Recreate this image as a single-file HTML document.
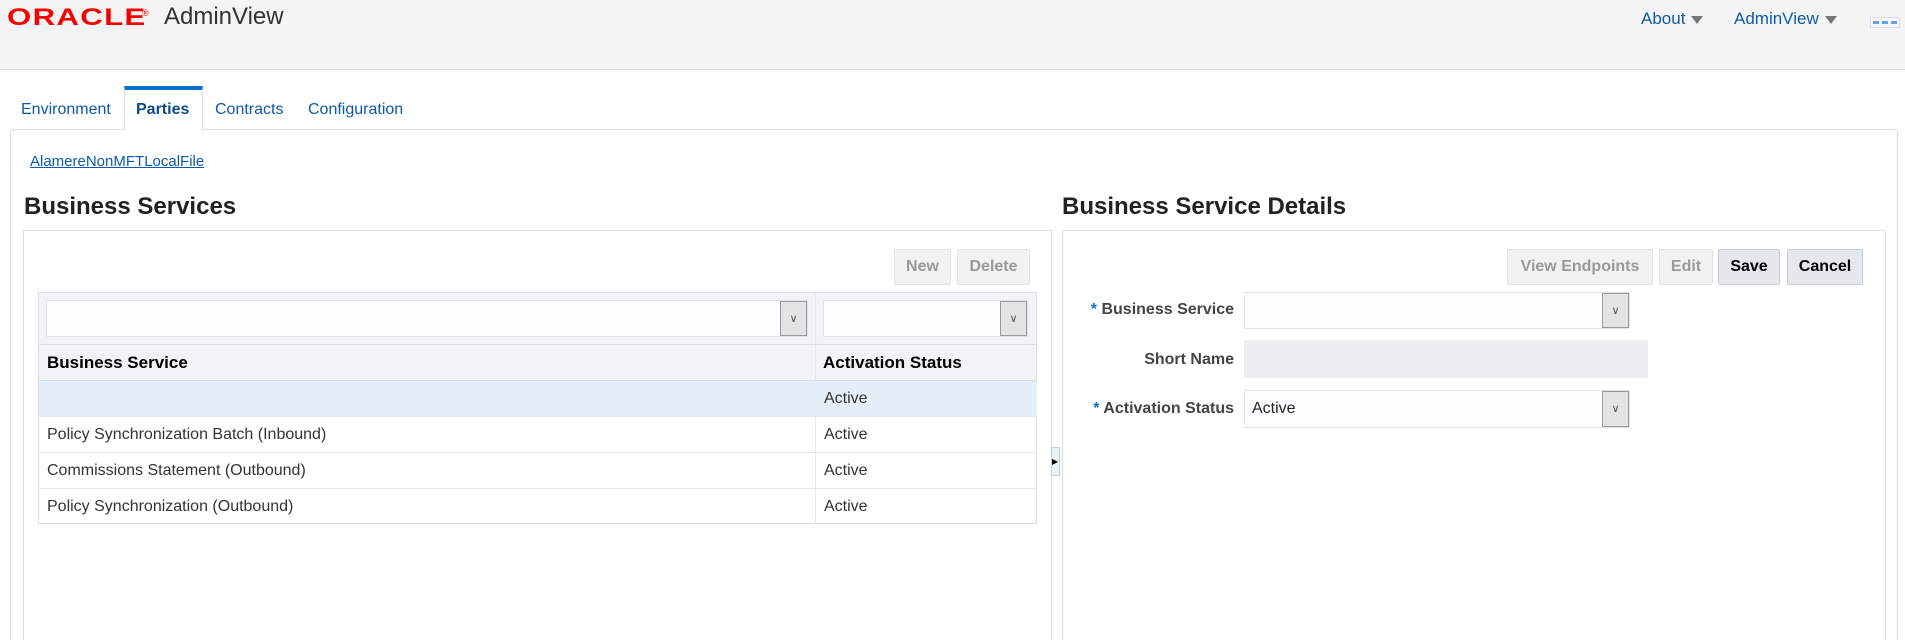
<!DOCTYPE html>
<html style="height:640px;overflow:hidden"><head><meta charset="utf-8"><style>
*{box-sizing:border-box;margin:0;padding:0}
body{width:1905px;height:640px;overflow:hidden;background:#fff;font-family:"Liberation Sans",Arial,sans-serif;position:relative;color:#333}
.a{position:absolute}
.hdr{left:0;top:0;width:1905px;height:70px;background:#f4f4f4;border-bottom:1px solid #d6dfe6}
.logo{left:7px;top:4px;font-size:24px;font-weight:bold;color:#f80000;letter-spacing:1px;transform:scaleX(1.3);transform-origin:left}
.tabs{font-size:16px;color:#0e5aa7}
.btn{height:36px;border:1px solid #dfe4e7;background:#f1f3f3;border-radius:2px;font-size:16px;font-weight:bold;color:#999;text-align:center;line-height:34px}
.btn.on{color:#000;background:#e4e8ea;border-color:#c4ced7}
.sel{border:1px solid #dfe4e7;background:#fcfdfe;border-radius:2px}
.dd{position:absolute;right:0;top:0;bottom:0;width:27px;background:#e4e4e4;border:1px solid #999;font-size:11px;color:#555;text-align:center}
.row{left:39px;width:998px;height:36px;border-bottom:1px solid #e4e8ea;font-size:16px;line-height:36px}
.row span{position:absolute;left:8px}
.row b{position:absolute;left:785px;font-weight:normal}
.lbl{font-size:16px;font-weight:bold;color:#444;text-align:right;width:200px}
.star{color:#0572ce}
.tri{display:inline-block;width:0;height:0;border-left:6px solid transparent;border-right:6px solid transparent;border-top:8px solid #777;margin-left:6px;vertical-align:middle}
</style></head><body>
<div class="a hdr"></div>
<div class="a logo">ORACLE</div>
<div class="a" style="left:142px;top:8px;font-size:9px;color:#f80000">®</div>
<div class="a" style="left:164px;top:3px;font-size:24px;color:#333">AdminView</div>
<div class="a tabs" style="left:1641px;top:9px;font-size:17px">About<span class="tri"></span></div>
<div class="a tabs" style="left:1734px;top:9px;font-size:17px">AdminView<span class="tri"></span></div>
<div class="a" style="left:1870px;top:17px;width:30px;height:11px;border:1px solid #dde;background:#f8f8fa"><div style="margin:3px 2px;height:3px;border-top:3px dashed #5aa5e8"></div></div>

<div class="a" style="left:10px;top:129px;width:1888px;height:540px;border:1px solid #d6dfe6;border-radius:4px"></div>
<div class="a" style="left:124px;top:86px;width:79px;height:45px;border:1px solid #d6dfe6;border-top:4px solid #0572ce;border-bottom:none;background:#fff"></div>
<div class="a tabs" style="left:21px;top:101px">Environment</div>
<div class="a tabs" style="left:136px;top:101px;font-weight:bold;color:#0e4a86">Parties</div>
<div class="a tabs" style="left:215px;top:101px">Contracts</div>
<div class="a tabs" style="left:308px;top:101px">Configuration</div>
<div class="a" style="left:30px;top:153px;font-size:15px;color:#0e5aa7;text-decoration:underline">AlamereNonMFTLocalFile</div>

<div class="a" style="left:24px;top:193px;font-size:24px;font-weight:bold;color:#222">Business Services</div>
<div class="a" style="left:1062px;top:193px;font-size:24px;font-weight:bold;color:#222">Business Service Details</div>

<div class="a" style="left:23px;top:230px;width:1029px;height:440px;border:1px solid #d6dfe6"></div>
<div class="a" style="left:1062px;top:230px;width:824px;height:440px;border:1px solid #d6dfe6"></div>
<div class="a" style="left:1051px;top:447px;width:9px;height:29px;border:1px solid #c4ced7;background:#eef1f3;font-size:8px;line-height:27px;color:#000">▶</div>

<div class="a btn" style="left:894px;top:249px;width:57px">New</div>
<div class="a btn" style="left:957px;top:249px;width:73px">Delete</div>

<div class="a" style="left:38px;top:292px;width:999px;height:232px;border:1px solid #d6dfe6"></div>
<div class="a" style="left:39px;top:293px;width:997px;height:88px;background:#f1f3f5;border-bottom:1px solid #d6dfe6"></div>
<div class="a" style="left:815px;top:293px;width:1px;height:230px;background:#e4e8ea"></div>
<div class="a sel" style="left:46px;top:300px;width:762px;height:37px"><div class="dd" style="line-height:34px">∨</div></div>
<div class="a sel" style="left:823px;top:300px;width:205px;height:37px"><div class="dd" style="line-height:34px">∨</div></div>
<div class="a" style="left:39px;top:344px;width:997px;height:1px;background:#d6dfe6"></div>
<div class="a" style="left:47px;top:353px;font-size:17px;font-weight:bold;color:#000">Business Service</div>
<div class="a" style="left:823px;top:353px;font-size:17px;font-weight:bold;color:#000">Activation Status</div>
<div class="a row" style="top:381px;background:#e3eef8"><b>Active</b></div>
<div class="a row" style="top:417px"><span>Policy Synchronization Batch (Inbound)</span><b>Active</b></div>
<div class="a row" style="top:453px"><span>Commissions Statement (Outbound)</span><b>Active</b></div>
<div class="a row" style="top:489px;border-bottom:none"><span>Policy Synchronization (Outbound)</span><b>Active</b></div>

<div class="a btn" style="left:1507px;top:249px;width:146px">View Endpoints</div>
<div class="a btn" style="left:1659px;top:249px;width:54px">Edit</div>
<div class="a btn on" style="left:1718px;top:249px;width:62px">Save</div>
<div class="a btn on" style="left:1787px;top:249px;width:76px">Cancel</div>

<div class="a lbl" style="left:1034px;top:301px"><span class="star">*</span> Business Service</div>
<div class="a lbl" style="left:1034px;top:351px">Short Name</div>
<div class="a lbl" style="left:1034px;top:400px"><span class="star">*</span> Activation Status</div>
<div class="a sel" style="left:1244px;top:292px;width:386px;height:37px"><div class="dd" style="line-height:34px">∨</div></div>
<div class="a" style="left:1244px;top:340px;width:404px;height:38px;background:#eeeef0;border-radius:2px"></div>
<div class="a sel" style="left:1244px;top:390px;width:386px;height:38px;font-size:16px;line-height:36px;padding-left:7px;color:#222">Active<div class="dd" style="line-height:34px">∨</div></div>
</body></html>
